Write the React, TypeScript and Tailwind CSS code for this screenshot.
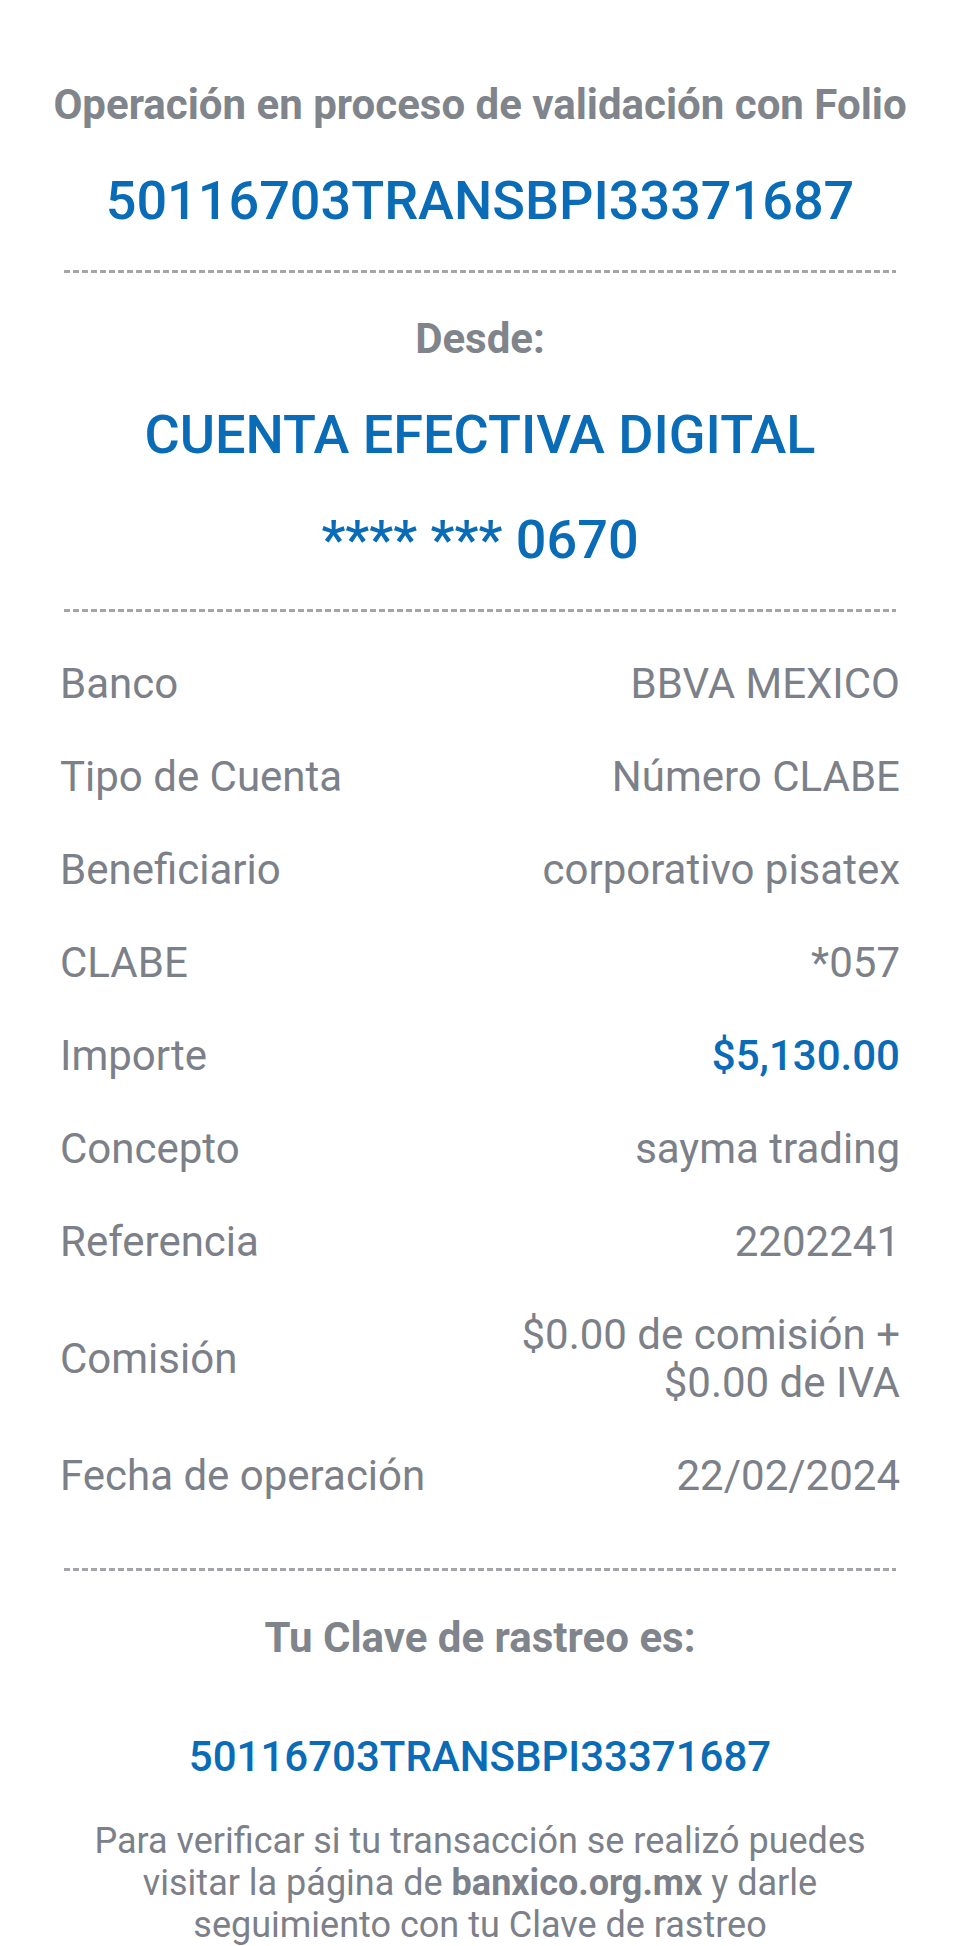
import React from 'react';

const rows: { label: string; value: React.ReactNode; blue?: boolean }[] = [
  { label: 'Banco', value: 'BBVA MEXICO' },
  { label: 'Tipo de Cuenta', value: 'Número CLABE' },
  { label: 'Beneficiario', value: 'corporativo pisatex' },
  { label: 'CLABE', value: '*057' },
  { label: 'Importe', value: '$5,130.00', blue: true },
  { label: 'Concepto', value: 'sayma trading' },
  { label: 'Referencia', value: '2202241' },
  { label: 'Comisión', value: '$0.00 de comisión + $0.00 de IVA' },
  { label: 'Fecha de operación', value: '22/02/2024' },
];

const Divider = () => (
  <div className="mx-[64px] h-[3px] bg-[repeating-linear-gradient(to_right,#a3a5a8_0_6px,transparent_6px_9px)]" />
);

export default function App() {
  return (
    <div className="w-full h-[1946px] overflow-hidden bg-white font-['Roboto',sans-serif] text-[#7c8088]">
      {/* Folio */}
      <div className="pt-[81px] text-center">
        <p className="text-[42px] leading-[48px] font-bold text-[#80848b]">
          Operación en proceso de validación con Folio
        </p>
        <p className="mt-[40px] text-[54px] leading-[64px] font-medium text-[#0a6bb6]">
          50116703TRANSBPI33371687
        </p>
      </div>

      <div className="mt-[37px]">
        <Divider />
      </div>

      {/* Cuenta origen */}
      <div className="mt-[42px] text-center">
        <p className="text-[42px] leading-[48px] font-bold text-[#80848b]">Desde:</p>
        <p className="mt-[40px] text-[54px] leading-[64px] font-medium text-[#0a6bb6]">
          CUENTA EFECTIVA DIGITAL
        </p>
        <p className="mt-[41px] text-[54px] leading-[64px] font-medium text-[#0a6bb6]">
          **** *** 0670
        </p>
      </div>

      <div className="mt-[37px]">
        <Divider />
      </div>

      {/* Detalle */}
      <div className="mt-[48px] px-[60px] flex flex-col gap-[45px]">
        {rows.map((r) => (
          <div key={r.label} className="flex items-center justify-between text-[42px] leading-[48px]">
            <span>{r.label}</span>
            <span className={`max-w-[440px] text-right ${r.blue ? 'text-[#0a6bb6] font-medium' : ''}`}>
              {r.value}
            </span>
          </div>
        ))}
      </div>

      <div className="mt-[68px]">
        <Divider />
      </div>

      {/* Rastreo */}
      <div className="mt-[43px] text-center">
        <p className="text-[42px] leading-[48px] font-bold text-[#80848b]">Tu Clave de rastreo es:</p>
        <p className="mt-[70px] text-[42px] leading-[50px] font-medium text-[#0a6bb6]">
          50116703TRANSBPI33371687
        </p>
        <p className="mx-auto mt-[38px] w-[820px] text-[36px] leading-[42px]">
          Para verificar si tu transacción se realizó puedes visitar la página de{' '}
          <span className="font-bold">banxico.org.mx</span> y darle seguimiento con tu Clave de rastreo
        </p>
      </div>
    </div>
  );
}
